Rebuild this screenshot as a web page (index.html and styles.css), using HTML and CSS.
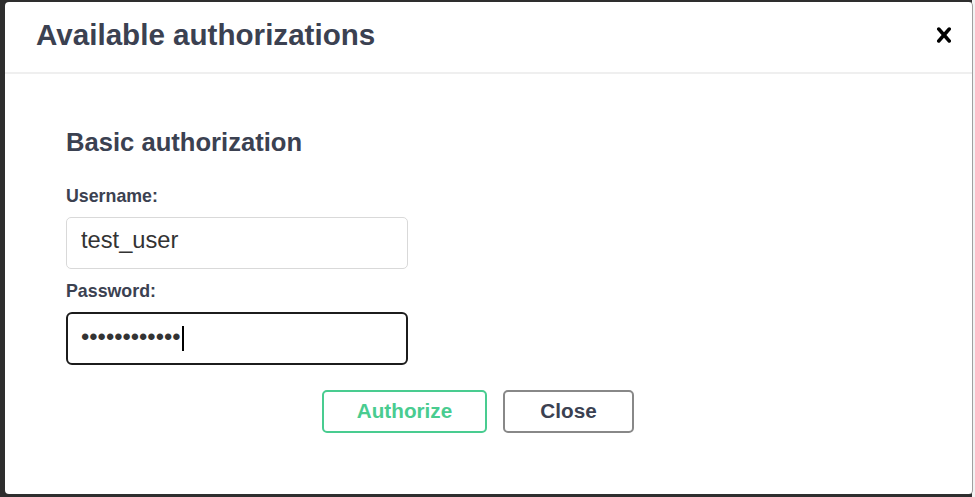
FILE: index.html
```html
<!DOCTYPE html>
<html lang="en">
<head>
  <meta charset="UTF-8" />
  <meta name="viewport" content="width=device-width, initial-scale=1.0"/>
  <title>Available authorizations</title>
  <link rel="stylesheet" href="styles.css">
</head>
<body>

  <!-- Auth Modal -->
  <div class="modal">
    <div class="modal-header">
      <h3>Available authorizations</h3>
      <button class="close-modal" aria-label="Close">
        <svg width="30" height="30" viewBox="0 0 20 20" aria-hidden="true">
          <path d="M14.348 14.849c-.469.469-1.229.469-1.697 0L10 11.819l-2.651 3.029c-.469.469-1.229.469-1.697 0-.469-.469-.469-1.229 0-1.697l2.758-3.15-2.759-3.152c-.469-.469-.469-1.228 0-1.697.469-.469 1.228-.469 1.697 0L10 8.183l2.651-3.031c.469-.469 1.228-.469 1.697 0 .469.469.469 1.229 0 1.697l-2.758 3.152 2.758 3.15c.469.469.469 1.229 0 1.698z"/>
        </svg>
      </button>
    </div>

    <div class="modal-body">
      <div class="auth-container">
        <h4>Basic authorization</h4>
        <form class="auth-form" onsubmit="return false">
          <label for="username">Username:</label>
          <input type="text" id="username" value="test_user" />

          <label for="password">Password:</label>
          <div class="field-wrap">
            <input type="password" id="password" class="is-focused" value="secretpass12" />
            <span class="caret"></span>
          </div>

          <div class="auth-btn-wrapper">
            <button type="submit" class="btn btn-authorize">Authorize</button>
            <button type="button" class="btn btn-done">Close</button>
          </div>
        </form>
      </div>
    </div>
  </div>

</body>
</html>
```

FILE: styles.css
```css
* {
  box-sizing: border-box;
  margin: 0;
  padding: 0;
}

body, html {
  font-family: 'Liberation Sans', Arial, sans-serif;
  height: 100%;
  overflow: hidden;
}

body {
  background: linear-gradient(to right, #2e2e2e 972px, #f2f2f2 972px);
  padding: 2px 2px 3px 5px;
}

.modal {
  height: 492px;
  background: #fff;
  border-radius: 4px;
  border-right: 1px solid #a0a0a0;
  color: #3b4151;
}

.modal-header {
  display: flex;
  align-items: center;
  justify-content: space-between;
  height: 72px;
  padding: 0 13px 4px 31px;
  border-bottom: 2px solid #efefef;
}

.modal-header h3 {
  font-size: 29.6px;
  line-height: 36px;
  font-weight: bold;
  color: #3b4151;
}

.close-modal {
  display: flex;
  background: none;
  border: none;
  cursor: pointer;
}

.close-modal svg {
  fill: #000;
}

.modal-body {
  padding: 53px 0 0 61px;
}

.auth-container h4 {
  font-size: 25.6px;
  line-height: 30px;
  font-weight: bold;
  color: #3b4151;
  margin-bottom: 28px;
}

.auth-form label {
  display: block;
  font-size: 17.8px;
  line-height: 22px;
  font-weight: bold;
  color: #3b4151;
  margin-bottom: 9.5px;
}

.auth-form label + .field-wrap {
  margin-bottom: 0;
}

.auth-form input {
  display: block;
  width: 342px;
  height: 52px;
  padding: 0 14px 4px;
  border: 1.5px solid #d9d9d9;
  border-radius: 5px;
  font-family: inherit;
  font-size: 23.7px;
  color: #333;
  background: #fff;
  outline: none;
}

#username {
  margin-bottom: 11.5px;
}

.field-wrap {
  position: relative;
  width: 342px;
}

.auth-form input.is-focused {
  height: 53px;
  border: 2.5px solid #1c1c1c;
  border-radius: 6px;
  padding: 0 13px 2px;
  caret-color: transparent;
}

.caret {
  position: absolute;
  left: 116px;
  top: 14px;
  width: 2px;
  height: 25px;
  background: #000;
}

.auth-btn-wrapper {
  display: flex;
  justify-content: center;
  gap: 16px;
  margin-top: 25px;
  margin-left: -61px;
  padding-right: 21px;
}

.btn {
  height: 43px;
  background: #fff;
  border-radius: 5px;
  border: 2.5px solid #888;
  font-family: inherit;
  font-size: 20.7px;
  font-weight: bold;
  color: #3b4151;
  cursor: pointer;
}

.btn-authorize {
  width: 165px;
  border-color: #49cc90;
  color: #49cc90;
}

.btn-done {
  width: 131px;
}
```
